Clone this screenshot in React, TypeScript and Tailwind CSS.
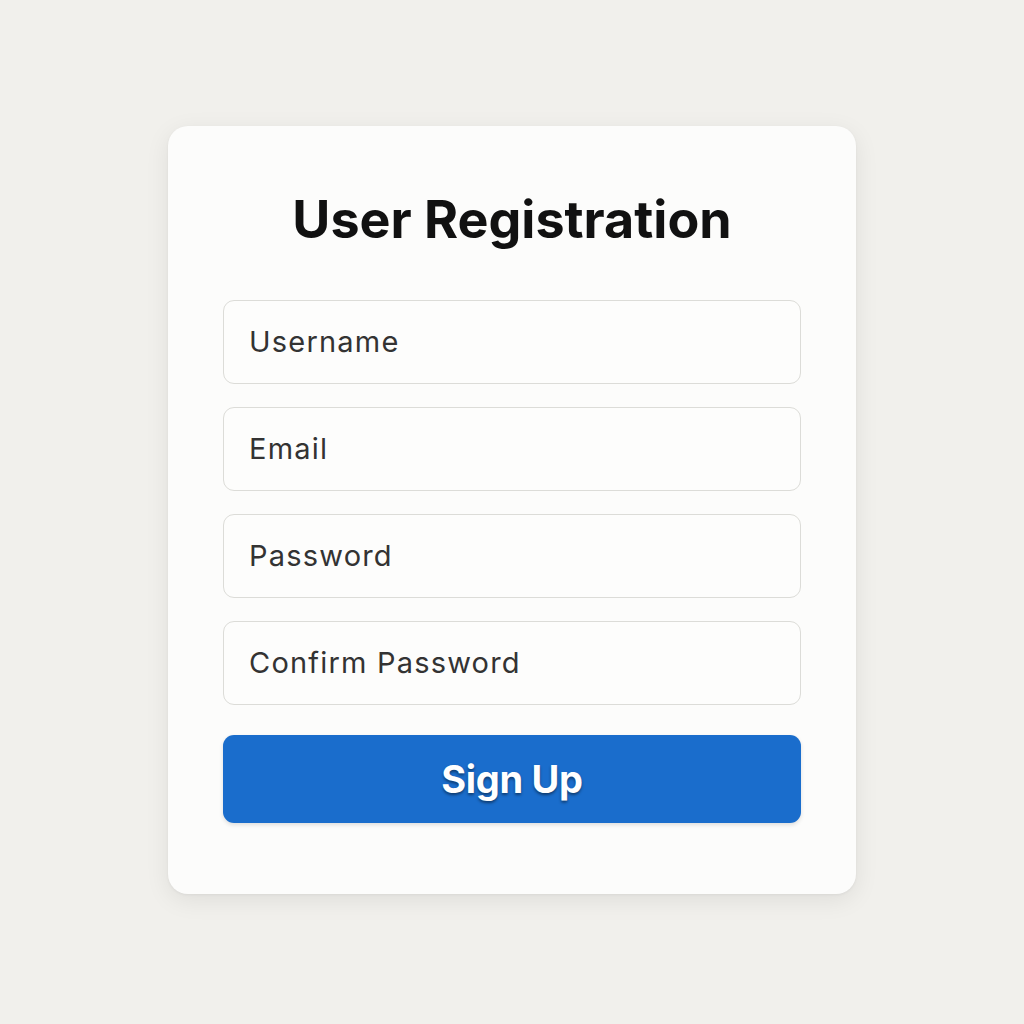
import React from "react";

export default function App() {
  const fields = ["Username", "Email", "Password", "Confirm Password"];
  return (
    <div className="w-[1024px] h-[1024px] bg-[#f1f0ec] flex justify-center pt-[126px]" style={{ fontFamily: "Inter, 'Noto Sans', sans-serif" }}>
      <div className="w-[688px] h-[768px] bg-[#fcfcfb] rounded-[20px] shadow-[0_6px_24px_rgba(0,0,0,0.08),0_1px_3px_rgba(0,0,0,0.05)] flex flex-col items-center pt-[62px] px-[55px]">
        <h1 className="text-[52px] leading-[64px] font-bold text-[#111] tracking-[0px]">User Registration</h1>
        <div className="w-full mt-[48px] flex flex-col gap-[23px]">
          {fields.map((f) => (
            <div key={f} className="h-[84px] w-full rounded-[11px] border border-[#dcdcd8] bg-[#fdfdfc] flex items-center px-[25px] text-[29px] text-[#333] tracking-[1.2px]">
              {f}
            </div>
          ))}
        </div>
        <button className="mt-[30px] w-full h-[88px] rounded-[11px] bg-[#1a6dcc] text-white text-[38px] font-bold tracking-[-0.3px] [text-shadow:0_2px_3px_rgba(0,0,0,0.45)] shadow-[0_2px_4px_rgba(0,0,0,0.12)]">
          Sign Up
        </button>
      </div>
    </div>
  );
}
